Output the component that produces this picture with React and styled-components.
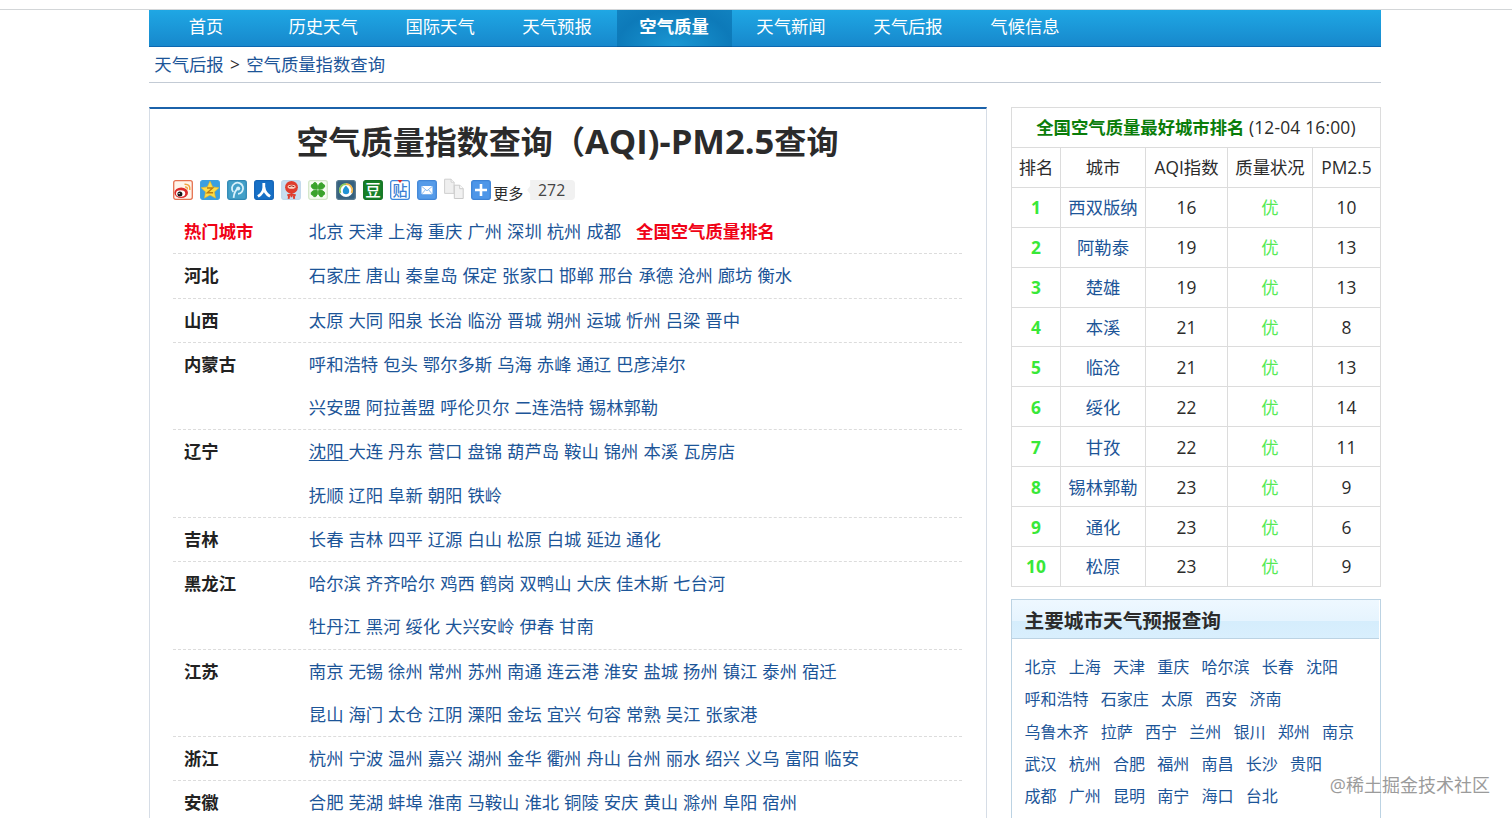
import React from "react";
import styled, { createGlobalStyle } from "styled-components";

const GlobalStyle = createGlobalStyle`
  * {
    box-sizing: border-box;
  }

  body {
    margin: 0;
    background: #fff;
    color: #2b2b2b;
    font-family: "Open Sans", "Noto Sans CJK SC", sans-serif;
    font-size: 17.35px;
    overflow: hidden;
  }

  a {
    color: #1c5598;
    text-decoration: none;
  }
`;

const Page = styled.div`
  height: 818px;
  padding-top: 9px;
  overflow: hidden;
`;

const Container = styled.div`
  width: 1232px;
  margin-left: 149px;
`;

const TopLine = styled.div`
  height: 1px;
  background: #d3d6d8;
`;

const Nav = styled.nav`
  display: flex;
  gap: 2.2px;
  height: 37px;
  background: linear-gradient(#1fa7e4, #1788cc);
  border-bottom: 1px solid #0d68b1;
`;

const NavItem = styled.a`
  width: 114.8px;
  height: 37px;
  padding-right: 0.6px;
  line-height: 33px;
  text-align: center;
  color: #fff;
  font-weight: ${({ $active }) => ($active ? 700 : 400)};
  background: ${({ $active }) =>
    $active
      ? "radial-gradient(ellipse at 50% 100%, #1a97d3 0%, #0d7ab9 70%, #1182c0 100%)"
      : "none"};
  border-bottom: 1px solid ${({ $active }) => ($active ? "#0a5d9f" : "transparent")};
`;

const Breadcrumb = styled.div`
  height: 36px;
  padding-left: 5.3px;
  line-height: 35px;
  border-bottom: 1px solid #c3cbd5;
  word-spacing: 1.8px;
`;

const Columns = styled.div`
  display: flex;
  justify-content: space-between;
  align-items: flex-start;
  margin-top: 24px;
`;

const Panel = styled.main`
  width: 838px;
  height: 720px;
  padding: 0 24px 0 23px;
  border: 1px solid #d6dde6;
  border-top: 2px solid #1b62aa;
`;

const Title = styled.h1`
  margin: 0;
  height: 71px;
  line-height: 66px;
  font-size: 32.05px;
  text-align: center;
  white-space: nowrap;
`;

const TitleLatin = styled.span`
  font-size: 34.6px;
  line-height: 1;
`;

const ShareBar = styled.div`
  display: flex;
  height: 30px;
  align-items: flex-start;

  svg {
    flex: none;
    width: 20px;
    height: 20px;
    margin-right: 7.1px;
    overflow: visible;
  }
`;

const More = styled.span`
  margin: 3px 4px 0 -5px;
  font-size: 15px;
  line-height: 20px;
`;

const Count = styled.span`
  width: 48px;
  height: 20px;
  padding-left: 1px;
  line-height: 20px;
  border-radius: 4px;
  background: #f1f1f1;
  clip-path: polygon(0 50%, 3px 30%, 3px 0, 100% 0, 100% 100%, 3px 100%, 3px 70%);
  text-align: center;
  font-size: 15.8px;
  color: #444;
`;

const Province = styled.div`
  display: flex;
  padding-left: 11px;
  line-height: 43px;
  border-bottom: 1px dashed #dcdcdc;
`;

const ProvinceName = styled.div`
  width: 124.8px;
  font-weight: 700;
  color: ${({ $hot }) => ($hot ? "#f00216" : "#222")};
`;

const CityLine = styled.div`
  height: 43.28px;
  white-space: pre;
  word-spacing: 0.45px;
`;

const City = styled.a`
  text-decoration: ${({ $underlined }) => ($underlined ? "underline" : "none")};
  text-decoration-thickness: 1px;
  text-underline-offset: 2px;
`;

const RankLink = styled.a`
  margin-left: 10px;
  color: #f00216;
  font-weight: 700;
`;

const Sidebar = styled.aside`
  width: 370px;
`;

const RankTable = styled.table`
  width: 370px;
  table-layout: fixed;
  border-collapse: separate;
  border-spacing: 0;
  border: solid #dcdcdc;
  border-width: 1px 0 0 1px;
  text-align: center;
  white-space: nowrap;

  td {
    height: 39.92px;
    padding: 0;
    line-height: 24px;
    border: solid #dcdcdc;
    border-width: 0 1px 1px 0;
  }
`;

const TableTitle = styled.strong`
  color: #0a7d0a;
`;

const UpdateTime = styled.span`
  letter-spacing: 0.2px;
`;

const Rank = styled.td`
  color: #38e838;
  font-weight: 700;
`;

const Quality = styled.td`
  color: #55ea55;
`;

const ForecastBox = styled.section`
  height: 300px;
  margin-top: 12px;
  border: 1px solid #bcd3e3;
`;

const ForecastTitle = styled.h2`
  margin: 0 1px 0 0;
  height: 39px;
  padding-left: 12.5px;
  line-height: 41px;
  font-size: 19.65px;
  background: linear-gradient(#eef8ff 0%, #e6f4fe 54%, #d5edfc 55%, #d9effd 100%);
  border-bottom: 1px solid #bcd3e3;
`;

const ForecastList = styled.div`
  padding: 12.5px 0 0 12.4px;
`;

const ForecastLine = styled.div`
  display: flex;
  gap: 12.2px;
  height: 32.1px;
  line-height: 32.1px;
  font-size: 16.05px;
`;

const Watermark = styled.div`
  position: absolute;
  right: 22px;
  top: 771px;
  line-height: 28px;
  font-size: 18px;
  color: #9b9b9b;
  text-shadow: 0 0 2px #fff;
`;

const IconText = styled.text`
  font-family: "Noto Sans CJK SC", sans-serif;
  font-weight: ${({ $weight }) => $weight};
  text-anchor: middle;
`;

const navItems = [
  "首页",
  "历史天气",
  "国际天气",
  "天气预报",
  "空气质量",
  "天气新闻",
  "天气后报",
  "气候信息",
];

const provinces = [
  { name: "热门城市", hot: true, lines: ["北京 天津 上海 重庆 广州 深圳 杭州 成都"] },
  { name: "河北", lines: ["石家庄 唐山 秦皇岛 保定 张家口 邯郸 邢台 承德 沧州 廊坊 衡水"] },
  { name: "山西", lines: ["太原 大同 阳泉 长治 临汾 晋城 朔州 运城 忻州 吕梁 晋中"] },
  {
    name: "内蒙古",
    lines: [
      "呼和浩特 包头 鄂尔多斯 乌海 赤峰 通辽 巴彦淖尔",
      "兴安盟 阿拉善盟 呼伦贝尔 二连浩特 锡林郭勒",
    ],
  },
  {
    name: "辽宁",
    lines: [
      "沈阳 大连 丹东 营口 盘锦 葫芦岛 鞍山 锦州 本溪 瓦房店",
      "抚顺 辽阳 阜新 朝阳 铁岭",
    ],
  },
  { name: "吉林", lines: ["长春 吉林 四平 辽源 白山 松原 白城 延边 通化"] },
  {
    name: "黑龙江",
    lines: [
      "哈尔滨 齐齐哈尔 鸡西 鹤岗 双鸭山 大庆 佳木斯 七台河",
      "牡丹江 黑河 绥化 大兴安岭 伊春 甘南",
    ],
  },
  {
    name: "江苏",
    lines: [
      "南京 无锡 徐州 常州 苏州 南通 连云港 淮安 盐城 扬州 镇江 泰州 宿迁",
      "昆山 海门 太仓 江阴 溧阳 金坛 宜兴 句容 常熟 吴江 张家港",
    ],
  },
  {
    name: "浙江",
    lines: ["杭州 宁波 温州 嘉兴 湖州 金华 衢州 舟山 台州 丽水 绍兴 义乌 富阳 临安"],
  },
  {
    name: "安徽",
    lines: ["合肥 芜湖 蚌埠 淮南 马鞍山 淮北 铜陵 安庆 黄山 滁州 阜阳 宿州"],
  },
];

const ranking = [
  ["西双版纳", 16, 10],
  ["阿勒泰", 19, 13],
  ["楚雄", 19, 13],
  ["本溪", 21, 8],
  ["临沧", 21, 13],
  ["绥化", 22, 14],
  ["甘孜", 22, 11],
  ["锡林郭勒", 23, 9],
  ["通化", 23, 6],
  ["松原", 23, 9],
];

const forecast = [
  "北京 上海 天津 重庆 哈尔滨 长春 沈阳",
  "呼和浩特 石家庄 太原 西安 济南",
  "乌鲁木齐 拉萨 西宁 兰州 银川 郑州 南京",
  "武汉 杭州 合肥 福州 南昌 长沙 贵阳",
  "成都 广州 昆明 南宁 海口 台北",
];

const Tile = ({ fill, stroke = fill, children }) => (
  <svg viewBox="0 0 20 20">
    <rect x="0.7" y="0.7" width="18.6" height="18.6" rx="2" fill={fill} stroke={stroke} strokeWidth="1.3" />
    {children}
  </svg>
);

const ShareIcons = () => (
  <>
    {/* weibo */}
    <Tile fill="#fff4ea" stroke="#e5714f">
      <ellipse cx="8.2" cy="12.8" rx="6.8" ry="5.2" fill="#dc2b2b" />
      <ellipse cx="7.6" cy="13.6" rx="4.6" ry="3.3" fill="#fff" />
      <circle cx="6.9" cy="14" r="2.5" fill="#161616" />
      <circle cx="6.1" cy="13.6" r="0.7" fill="#fff" />
      <path d="M11.5 4.3Q17.5 4 16.8 10M12 7Q14.7 6.8 14.3 9.5" fill="none" stroke="#f2a340" strokeWidth="1.5" />
    </Tile>
    {/* qzone */}
    <Tile fill="#3a9fe0">
      <path d="M10 1.2l2.7 5.7 6.2.8-4.5 4.2 1.1 6.2-5.5-3-5.5 3 1.1-6.2-4.5-4.2 6.2-.8z" fill="#ffdc45" stroke="#f0b91e" strokeWidth=".6" />
      <path d="M7 8h5.7L7.3 12.8h5.8" fill="none" stroke="#b97d12" strokeWidth="1.4" />
    </Tile>
    {/* tencent weibo */}
    <Tile fill="#43a0c8" stroke="#3089b5">
      <path d="M6.3 12A5.6 5.6 0 1 1 11 13.9M11.2 8.3Q7.2 11 6.6 17.8" fill="none" stroke="#d8f1fb" strokeWidth="1.8" />
      <circle cx="11.2" cy="8.5" r="2" fill="#d8f1fb" />
    </Tile>
    {/* renren */}
    <Tile fill="#1770c6" stroke="#1263b7">
      <path d="M9.8 3V7.5Q9.6 13 3.9 16.4M10 7.5Q10.5 13 16.1 16.4" fill="none" stroke="#fff" strokeWidth="2.8" />
    </Tile>
    {/* kaixin */}
    <Tile fill="#c7def1" stroke="#c1d8eb">
      <circle cx="10.5" cy="7.3" r="6.4" fill="#df3c2d" />
      <ellipse cx="10.6" cy="6.8" rx="4" ry="2" fill="#fbd6c7" />
      <path d="M7.8 6.8q2.8-2 5.6 0" fill="none" stroke="#9e241c" />
      <path d="M10.5 12.5v4.8M6.3 15.2l4.2-.6 4.2.6M7.6 18.8l.6-3.5M13.2 18.8l-.4-3.5" fill="none" stroke="#df3c2d" strokeWidth="1.9" />
    </Tile>
    {/* clover */}
    <Tile fill="#f7fcf2" stroke="#d3e6c8">
      <g fill="#3ba32b" stroke="#3ba32b" strokeWidth=".9">
        <path d="M9.3 9.3Q4.5 9.8 3.2 6.8 2.8 4 5.2 4.2 5.5 1.8 8 2.8 10.3 5 9.3 9.3z" />
        <path d="M10.6 9.3Q9.5 4.5 12.2 3 14.8 2 15 4.2 17.3 4.5 16.6 7 15 9.8 10.6 9.3z" />
        <path d="M9.3 10.4Q4.5 9.8 3.2 12.5 2.6 15.2 5 15.3 5.3 17.4 7.8 16.6 10.2 14.8 9.3 10.4z" />
        <path d="M10.6 10.4Q15 9.8 16.5 12.2 17.4 14.8 15 15.2 14.8 17.6 12.3 16.7 9.8 15 10.6 10.4z" />
      </g>
    </Tile>
    {/* pengyou */}
    <Tile fill="#35617f" stroke="#55788f">
      <circle cx="10" cy="10.2" r="6.8" fill="#fff" />
      <path d="M10 4.2A6 6 0 0 0 4.5 13" fill="none" stroke="#8fc95b" strokeWidth="1.7" />
      <path d="M10 4.2A6 6 0 0 1 15.5 13" fill="none" stroke="#f3b84b" strokeWidth="1.7" />
      <path d="M10 5.5q-3.2 3.3-3.2 5.5a3.2 3.2 0 0 0 6.4 0Q13.2 8.8 10 5.5z" fill="#1f92d5" />
    </Tile>
    {/* douban */}
    <Tile fill="#168128" stroke="#127322">
      <IconText x="10" y="15.6" fontSize="15.5" $weight={500} fill="#fff">豆</IconText>
    </Tile>
    {/* tieba */}
    <Tile fill="#fff" stroke="#3c87dc">
      <IconText x="10" y="15.8" fontSize="15" $weight={500} fill="#3c7fd4">贴</IconText>
      <path d="M7.5 0h5L10 3z" fill="#df292d" />
    </Tile>
    {/* mail */}
    <Tile fill="#559be9" stroke="#4186d8">
      <rect x="4.5" y="6" width="11" height="8.2" rx="0.8" fill="#fff" />
      <path d="M5 6.6l5 4.2 5-4.2M5 13.8l3.4-4M15 13.8l-3.4-4" fill="none" stroke="#80b4ed" strokeWidth=".9" />
    </Tile>
    {/* copy */}
    <svg viewBox="0 0 20 20">
      <path d="M.6-.8h6.5l3 3v11.2H.6z" fill="#efefef" stroke="#cfcfcf" />
      <path d="M7.1-.8v3h3" fill="#fff" stroke="#cfcfcf" />
      <path d="M10.3 5.2h5.4l3.5 3.5v9.8h-8.9z" fill="#f1f1f1" stroke="#cacaca" />
      <path d="M15.7 5.2v3.5h3.5" fill="#fff" stroke="#cacaca" />
    </svg>
    {/* more */}
    <Tile fill="#4e96e8" stroke="#3d83d6">
      <path d="M10 4v12M4 10h12" stroke="#fff" strokeWidth="2.6" />
    </Tile>
  </>
);

const Cities = ({ line }) => {
  const names = line.split(" ");
  return names.map((name, i) => (
    <City key={name} href="#" $underlined={line.startsWith("沈阳") && i === 0}>
      {i < names.length - 1 ? `${name} ` : name}
    </City>
  ));
};

const App = () => {
  return (
    <>
      <GlobalStyle />
      <Page>
        <TopLine />
        <Container>
          <Nav>
            {navItems.map((item) => (
              <NavItem key={item} href="#" $active={item === "空气质量"}>
                {item}
              </NavItem>
            ))}
          </Nav>
          <Breadcrumb>
            <a href="#">天气后报</a> &gt; <a href="#">空气质量指数查询</a>
          </Breadcrumb>

          <Columns>
            <Panel>
              <Title>
                空气质量指数查询（<TitleLatin>AQI)-PM2.5</TitleLatin>查询
              </Title>
              <ShareBar>
                <ShareIcons />
                <More>更多</More>
                <Count>272</Count>
              </ShareBar>
              {provinces.map(({ name, hot, lines }) => (
                <Province key={name}>
                  <ProvinceName $hot={hot}>{name}</ProvinceName>
                  <div>
                    {lines.map((line) => (
                      <CityLine key={line}>
                        <Cities line={line} />
                        {hot && (
                          <>
                            {" "}
                            <RankLink href="#">全国空气质量排名</RankLink>
                          </>
                        )}
                      </CityLine>
                    ))}
                  </div>
                </Province>
              ))}
            </Panel>

            <Sidebar>
              <RankTable>
                <colgroup>
                  <col width="49" />
                  <col width="85" />
                  <col width="82" />
                  <col width="85" />
                  <col width="68" />
                </colgroup>
                <tbody>
                  <tr>
                    <td colSpan="5">
                      <TableTitle>全国空气质量最好城市排名</TableTitle>{" "}
                      <UpdateTime>(12-04 16:00)</UpdateTime>
                    </td>
                  </tr>
                  <tr>
                    <td>排名</td>
                    <td>城市</td>
                    <td>AQI指数</td>
                    <td>质量状况</td>
                    <td>PM2.5</td>
                  </tr>
                  {ranking.map(([city, aqi, pm], i) => (
                    <tr key={city}>
                      <Rank>{i + 1}</Rank>
                      <td>
                        <a href="#">{city}</a>
                      </td>
                      <td>{aqi}</td>
                      <Quality>优</Quality>
                      <td>{pm}</td>
                    </tr>
                  ))}
                </tbody>
              </RankTable>

              <ForecastBox>
                <ForecastTitle>主要城市天气预报查询</ForecastTitle>
                <ForecastList>
                  {forecast.map((line) => (
                    <ForecastLine key={line}>
                      {line.split(" ").map((city) => (
                        <a key={city} href="#">
                          {city}
                        </a>
                      ))}
                    </ForecastLine>
                  ))}
                </ForecastList>
              </ForecastBox>
            </Sidebar>
          </Columns>
        </Container>
        <Watermark>@稀土掘金技术社区</Watermark>
      </Page>
    </>
  );
};

export default App;
